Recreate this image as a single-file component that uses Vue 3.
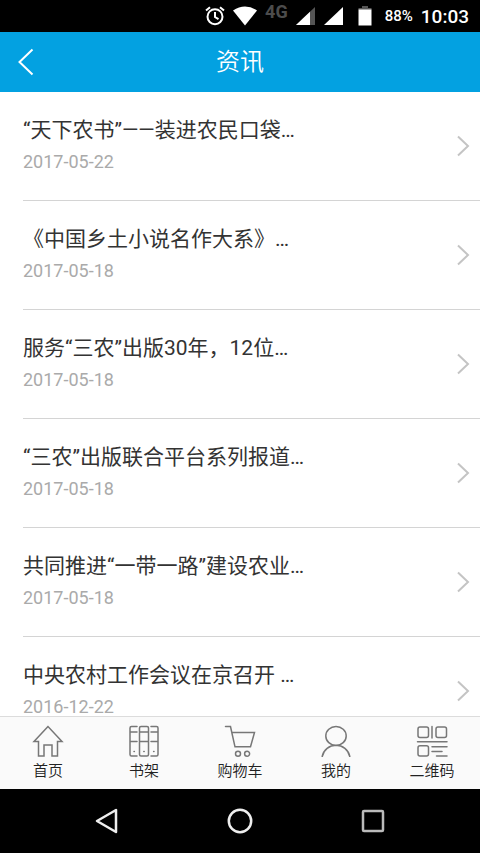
<script setup>
const articles = [
  { title: '“天下农书”——装进农民口袋…', date: '2017-05-22' },
  { title: '《中国乡土小说名作大系》…', date: '2017-05-18' },
  { title: '服务“三农”出版30年，12位…', date: '2017-05-18' },
  { title: '“三农”出版联合平台系列报道…', date: '2017-05-18' },
  { title: '共同推进“一带一路”建设农业…', date: '2017-05-18' },
  { title: '中央农村工作会议在京召开 …', date: '2016-12-22' }
]

const tabs = [
  { label: '首页', path: 'M16 1.5 2 16.5H6.5V31H12V20H20V31H25.5V16.5H30Z' },
  {
    label: '书架',
    path: 'M9 1.5H3.5Q2 1.5 2 3V29.5Q2 31 3.5 31H9M2 7H9M2 16.5H9M13 1.5H19Q20.5 1.5 20.5 3V29.5Q20.5 31 19 31H13Q11.5 31 11.5 29.5V3Q11.5 1.5 13 1.5ZM11.5 7H20.5M11.5 16.5H20.5M23 1.5H28.5Q30 1.5 30 3V29.5Q30 31 28.5 31H23M23 7H30M23 16.5H30M6 26.5H6.4M15.8 26.5H16.2M25.6 26.5H26'
  },
  {
    label: '购物车',
    path: 'M1.5 1.5H6.5L7.8 7.5H30.5L26.5 21.8H11L7.8 7.5M11.5 28.7a2.5 2.5 0 1 0 5 0a2.5 2.5 0 1 0-5 0M20.6 28.7a2.5 2.5 0 1 0 5 0a2.5 2.5 0 1 0-5 0'
  },
  {
    label: '我的',
    path: 'M5.8 10.9a10.2 9.5 0 1 0 20.4 0a10.2 9.5 0 1 0-20.4 0M2.2 31.5A14.1 14.1 0 0 1 29.8 31.5'
  },
  {
    label: '二维码',
    path: 'M4 2H10.5Q12.5 2 12.5 4V10.5Q12.5 12.5 10.5 12.5H4Q2 12.5 2 10.5V4Q2 2 4 2ZM22 2H28.5Q30.5 2 30.5 4V10.5Q30.5 12.5 28.5 12.5H22Q20 12.5 20 10.5V4Q20 2 22 2ZM16 1.5V13M1.5 16.7H31M4 20.7H10.5Q12.5 20.7 12.5 22.7V29Q12.5 31 10.5 31H4Q2 31 2 29V22.7Q2 20.7 4 20.7ZM16 21.7H31M16 26.4H26M20.5 31H31'
  }
]
</script>

<template>
  <div class="screen">
    <div class="status">
      <svg class="alarm" width="20" height="20" viewBox="0 0 20 20" aria-hidden="true">
        <circle cx="10" cy="10.7" r="7.5" />
        <path d="M1 4.6 5 1.2M19 4.6 15 1.2M10 6V11L13.5 13.2" />
      </svg>
      <svg class="solid" width="24" height="20" viewBox="0 0 24 20" aria-hidden="true">
        <path d="M0 4.5Q12-3.5 24 4.5L12 19.5Z" />
      </svg>
      <span class="network">4G</span>
      <svg class="solid" width="20" height="20" viewBox="0 0 20 20" aria-hidden="true">
        <path d="M0 19 19 1V19Z" class="dim" />
        <path d="M0 19 14 5.7V19Z" />
      </svg>
      <svg class="solid" width="20" height="20" viewBox="0 0 20 20" aria-hidden="true">
        <path d="M0 19 19 1V19Z" />
      </svg>
      <svg class="solid battery" width="14" height="20" viewBox="0 0 14 20" aria-hidden="true">
        <path d="M4 0H10V2H13.5V4H.5V2H4Z" class="dim" />
        <path d="M.5 3.5H13.5V19.5H.5Z" />
      </svg>
      <span class="percent">88%</span>
      <time class="clock">10:03</time>
    </div>

    <header class="header">
      <button class="back" type="button" aria-label="返回">
        <svg width="16" height="28" viewBox="0 0 16 28" aria-hidden="true">
          <path d="M14.5 1.5 1.5 14 14.5 26.5" />
        </svg>
      </button>
      <h1>资讯</h1>
    </header>

    <main class="list">
      <a v-for="item in articles" :key="item.title" class="row" href="#">
        <span class="text">
          <span class="title">{{ item.title }}</span>
          <time class="date">{{ item.date }}</time>
        </span>
        <svg class="chevron" width="14" height="22" viewBox="0 0 14 22" aria-hidden="true">
          <path d="M2 1.5 12 11 2 20.5" />
        </svg>
      </a>
    </main>

    <nav class="tabs">
      <a v-for="tab in tabs" :key="tab.label" class="tab" href="#">
        <svg width="32" height="32" viewBox="0 0 32 32" aria-hidden="true">
          <path :d="tab.path" />
        </svg>
        <span>{{ tab.label }}</span>
      </a>
    </nav>

    <div class="system">
      <button type="button" aria-label="返回上一页">
        <svg width="28" height="28" viewBox="0 0 28 28" aria-hidden="true">
          <path d="M23 3V25L4 14Z" />
        </svg>
      </button>
      <button type="button" aria-label="主屏幕">
        <svg width="28" height="28" viewBox="0 0 28 28" aria-hidden="true">
          <circle cx="14" cy="14" r="11.2" />
        </svg>
      </button>
      <button type="button" aria-label="最近任务">
        <svg class="recent" width="28" height="28" viewBox="0 0 28 28" aria-hidden="true">
          <rect x="4" y="4" width="20" height="20" rx="1" />
        </svg>
      </button>
    </div>
  </div>
</template>

<style>
body {
  margin: 0;
  background: #fff;
}
</style>

<style scoped>
.screen {
  display: flex;
  flex-direction: column;
  height: 100vh;
  overflow: hidden;
  background: #fff;
  font-family: Roboto, "Noto Sans CJK SC", sans-serif;
}

button {
  padding: 0;
  border: 0;
  background: none;
}

a {
  color: inherit;
  text-decoration: none;
}

svg {
  display: block;
  flex: none;
  fill: none;
}

.status {
  display: flex;
  flex: none;
  align-items: center;
  justify-content: flex-end;
  gap: 8px;
  height: 32px;
  padding-right: 11px;
  background: #000;
  color: #fff;
}

.alarm {
  stroke: #fff;
  stroke-width: 2;
}

.solid {
  fill: #fff;
}

.dim {
  fill: #555;
}

.network {
  align-self: flex-start;
  color: #4c4c4c;
  font-size: 18px;
  font-weight: 700;
  line-height: 24px;
}

.battery {
  margin: 0 5px 0 6px;
}

.percent {
  font-size: 15px;
  font-weight: 500;
}

.clock {
  font-size: 19px;
  font-weight: 500;
}

.header {
  display: grid;
  flex: none;
  grid-template-columns: 52px 1fr 52px;
  align-items: center;
  height: 60px;
  background: #03a1e1;
  color: #fff;
}

.back {
  display: flex;
  align-items: center;
  height: 60px;
  padding-left: 18px;
}

.back svg {
  stroke: #fff;
  stroke-width: 2;
}

h1 {
  margin: 0;
  font-size: 24px;
  font-weight: 350;
  line-height: 32px;
  text-align: center;
}

.list {
  flex: 1;
  min-height: 0;
  overflow: hidden;
}

.row {
  display: flex;
  align-items: center;
  justify-content: space-between;
  box-sizing: border-box;
  height: 109px;
  margin-left: 23px;
  padding-right: 10px;
  border-bottom: 1px solid #d4d4d4;
}

.text {
  display: flex;
  flex-direction: column;
  min-width: 0;
}

.title {
  color: #333;
  font-size: 21px;
  line-height: 32px;
  white-space: nowrap;
}

.date {
  color: #aaa;
  font-size: 18px;
  line-height: 32px;
}

.chevron {
  stroke: #c4c4c4;
  stroke-width: 2;
}

.tabs {
  display: grid;
  flex: none;
  grid-template-columns: repeat(5, 1fr);
  box-sizing: border-box;
  height: 73px;
  padding-top: 8px;
  border-top: 1px solid #dcdcdc;
  background: #fafafa;
}

.tab {
  display: flex;
  flex-direction: column;
  align-items: center;
  gap: 2px;
  color: #222;
  font-size: 15px;
  font-weight: 350;
  line-height: 24px;
}

.tab svg {
  stroke: #777;
  stroke-width: 1.5;
  stroke-linecap: round;
}

.system {
  display: grid;
  flex: none;
  grid-template-columns: repeat(3, 133px);
  justify-content: center;
  justify-items: center;
  align-items: center;
  height: 64px;
  background: #000;
}

.system svg {
  stroke: #eee;
  stroke-width: 2.5;
  stroke-linejoin: round;
}

.system .recent {
  stroke: #bbb;
}
</style>
